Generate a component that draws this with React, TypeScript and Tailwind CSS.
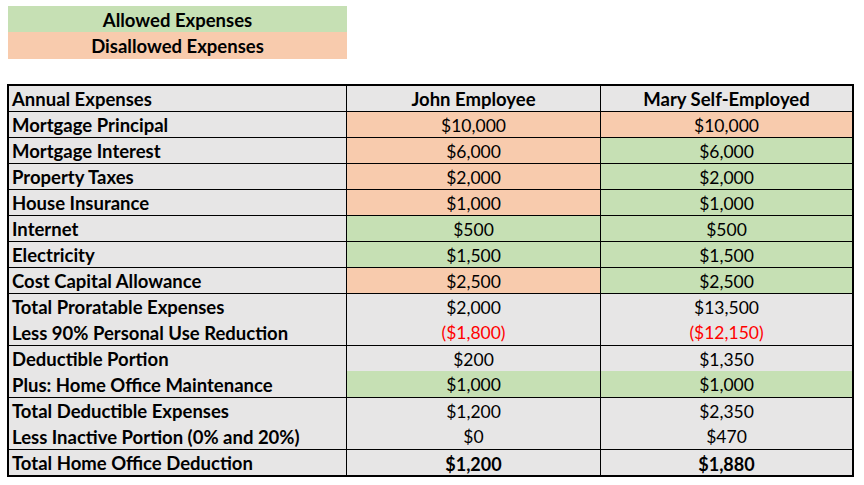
import React from "react";

type Tone = "gray" | "peach" | "green";

type Row = {
  label: string;
  john: string;
  mary: string;
  johnTone?: Tone;
  maryTone?: Tone;
  line?: boolean;
  red?: boolean;
  bold?: boolean;
};

const toneClass: Record<Tone, string> = {
  gray: "bg-[#e7e6e6]",
  peach: "bg-[#f8cbad]",
  green: "bg-[#c6e0b4]",
};

const rows: Row[] = [
  { label: "Mortgage Principal", john: "$10,000", mary: "$10,000", johnTone: "peach", maryTone: "peach", line: true },
  { label: "Mortgage Interest", john: "$6,000", mary: "$6,000", johnTone: "peach", maryTone: "green", line: true },
  { label: "Property Taxes", john: "$2,000", mary: "$2,000", johnTone: "peach", maryTone: "green", line: true },
  { label: "House Insurance", john: "$1,000", mary: "$1,000", johnTone: "peach", maryTone: "green", line: true },
  { label: "Internet", john: "$500", mary: "$500", johnTone: "green", maryTone: "green", line: true },
  { label: "Electricity", john: "$1,500", mary: "$1,500", johnTone: "green", maryTone: "green", line: true },
  { label: "Cost Capital Allowance", john: "$2,500", mary: "$2,500", johnTone: "peach", maryTone: "green", line: true },
  { label: "Total Proratable Expenses", john: "$2,000", mary: "$13,500", line: true },
  { label: "Less 90% Personal Use Reduction", john: "($1,800)", mary: "($12,150)", red: true },
  { label: "Deductible Portion", john: "$200", mary: "$1,350", line: true },
  { label: "Plus: Home Office Maintenance", john: "$1,000", mary: "$1,000", johnTone: "green", maryTone: "green" },
  { label: "Total Deductible Expenses", john: "$1,200", mary: "$2,350", line: true },
  { label: "Less Inactive Portion (0% and 20%)", john: "$0", mary: "$470" },
  { label: "Total Home Office Deduction", john: "$1,200", mary: "$1,880", line: true, bold: true },
];

const TableRow = ({ row }: { row: Row }) => {
  const valueText = `${row.red ? "text-[#ff0000]" : "text-black"} ${row.bold ? "font-bold text-[18px]" : "text-[17.5px]"}`;
  return (
    <div
      className={`grid grid-cols-[337px_254px_1fr] h-[26px] ${row.line ? "border-t border-black" : ""}`}
    >
      <div className="bg-[#e7e6e6] pl-[3px] pt-[2px] font-bold text-[18.5px] flex items-center">{row.label}</div>
      <div className={`${toneClass[row.johnTone ?? "gray"]} border-l border-black pt-[2px] flex items-center justify-center ${valueText}`}>
        {row.john}
      </div>
      <div className={`${toneClass[row.maryTone ?? "gray"]} border-l border-black pt-[2px] flex items-center justify-center ${valueText}`}>
        {row.mary}
      </div>
    </div>
  );
};

export default function App() {
  return (
    <div className="w-[864px] h-[485px] bg-white text-black leading-none font-['Lato','Open_Sans',sans-serif] pt-[6px]">
      <div className="ml-[8px] w-[339px] font-bold text-[18.5px]">
        <div className="h-[26px] bg-[#c6e0b4] pt-[2px] flex items-center justify-center">Allowed Expenses</div>
        <div className="h-[27px] bg-[#f8cbad] pt-[2px] flex items-center justify-center">Disallowed Expenses</div>
      </div>

      <div className="ml-[7px] mt-[25px] w-[847px] border-2 border-black">
        <div className="grid grid-cols-[337px_254px_1fr] h-[25px] font-bold text-[18.5px]">
          <div className="bg-[#e7e6e6] pl-[3px] pt-[2px] flex items-center">Annual Expenses</div>
          <div className="bg-[#e7e6e6] border-l border-black pt-[2px] flex items-center justify-center">John Employee</div>
          <div className="bg-[#e7e6e6] border-l border-black pt-[2px] flex items-center justify-center">Mary Self-Employed</div>
        </div>
        {rows.map((row, index) => (
          <TableRow key={index} row={row} />
        ))}
      </div>
    </div>
  );
}
